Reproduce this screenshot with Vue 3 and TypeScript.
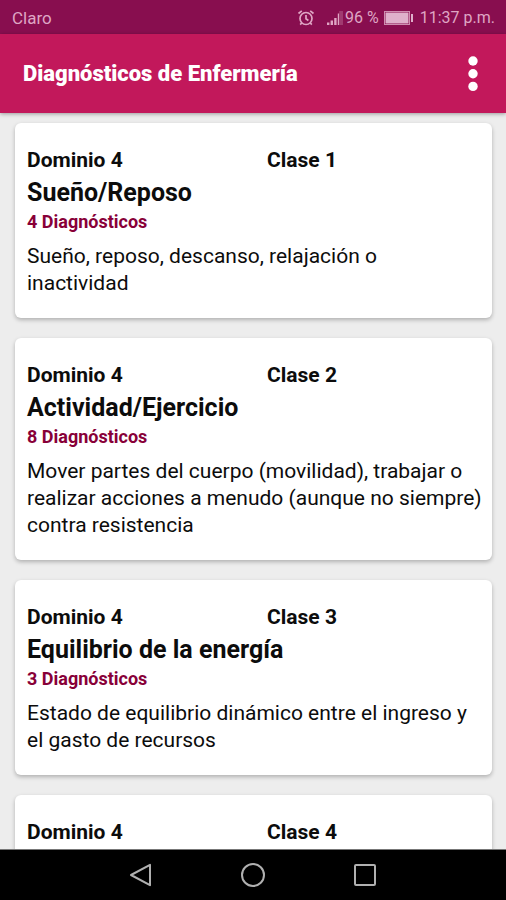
<script setup lang="ts">
interface ClassEntry {
  domain: number
  classNumber: number
  title: string
  diagnoses: number
  description: string
}

const entries: ClassEntry[] = [
  {
    domain: 4,
    classNumber: 1,
    title: 'Sueño/Reposo',
    diagnoses: 4,
    description: 'Sueño, reposo, descanso, relajación o inactividad',
  },
  {
    domain: 4,
    classNumber: 2,
    title: 'Actividad/Ejercicio',
    diagnoses: 8,
    description:
      'Mover partes del cuerpo (movilidad), trabajar o realizar acciones a menudo (aunque no siempre) contra resistencia',
  },
  {
    domain: 4,
    classNumber: 3,
    title: 'Equilibrio de la energía',
    diagnoses: 3,
    description: 'Estado de equilibrio dinámico entre el ingreso y el gasto de recursos',
  },
  {
    domain: 4,
    classNumber: 4,
    title: '',
    diagnoses: 0,
    description: '',
  },
]
</script>

<template>
  <div class="screen">
    <div class="status">
      <span class="carrier">Claro</span>
      <svg class="alarm" viewBox="0 0 18 18" width="18" height="18" aria-hidden="true">
        <circle cx="9" cy="9.5" r="6" />
        <path d="M9 6v3.8l2.4 1.7M1.5 4.5 4.8 1.8M16.5 4.5 13.2 1.8M4.8 13.8 3.2 15.6M13.2 13.8l1.6 1.8" />
      </svg>
      <svg class="signal" viewBox="0 0 18 16" width="18" height="16" aria-hidden="true">
        <path d="M0 12.5h2.4V15H0zM3.6 10.5H6V15H3.6zM7.2 8h2.4v7H7.2zM10.8 3.5h1.4V15h-1.4z" />
        <path class="dim" d="M12.2 1H16v14h-3.8z" />
      </svg>
      <span>96 %</span>
      <svg class="battery" viewBox="0 0 30 14" width="30" height="14" aria-hidden="true">
        <rect class="shell" x="0.5" y="0.5" width="25" height="13" />
        <rect x="1.5" y="1.5" width="23" height="11" />
        <rect x="27" y="3" width="2" height="8" />
      </svg>
      <span>11:37 p.m.</span>
    </div>

    <header class="app-bar">
      <h1>Diagnósticos de Enfermería</h1>
      <button class="menu" type="button" aria-label="Más opciones">
        <svg viewBox="0 0 10 36" width="10" height="36" aria-hidden="true">
          <circle cx="5" cy="5" r="4.7" />
          <circle cx="5" cy="17.7" r="4.7" />
          <circle cx="5" cy="30.4" r="4.7" />
        </svg>
      </button>
    </header>

    <main class="list">
      <article v-for="entry in entries" :key="entry.classNumber" class="card">
        <div class="labels">
          <span>Dominio {{ entry.domain }}</span>
          <span>Clase {{ entry.classNumber }}</span>
        </div>
        <template v-if="entry.title">
          <h2>{{ entry.title }}</h2>
          <p class="count">{{ entry.diagnoses }} Diagnósticos</p>
          <p class="description">{{ entry.description }}</p>
        </template>
      </article>
    </main>

    <nav class="nav-bar">
      <button type="button" aria-label="Atrás">
        <svg viewBox="0 0 24 24" width="24" height="24" aria-hidden="true">
          <path d="M21 1.8v20.4L2 12z" />
        </svg>
      </button>
      <button type="button" aria-label="Inicio">
        <svg viewBox="0 0 24 24" width="24" height="24" aria-hidden="true">
          <circle cx="12" cy="12" r="11" />
        </svg>
      </button>
      <button type="button" aria-label="Recientes">
        <svg viewBox="0 0 24 24" width="24" height="24" aria-hidden="true">
          <rect x="2" y="2" width="20" height="20" rx="1" />
        </svg>
      </button>
    </nav>
  </div>
</template>

<style>
body {
  margin: 0;
}
</style>

<style scoped>
.screen {
  display: flex;
  flex-direction: column;
  height: 100vh;
  overflow: hidden;
  background: #ededed;
  color: #0c0c0c;
  font-family: Roboto, "Liberation Sans", sans-serif;
}

button {
  display: flex;
  align-items: center;
  justify-content: center;
  padding: 0;
  border: 0;
  background: none;
}

.status {
  display: flex;
  flex: none;
  align-items: center;
  box-sizing: border-box;
  height: 34px;
  padding: 2px 11px 0 12px;
  background: #880e4f;
  color: #dfa6c4;
  font-size: 16px;
  line-height: 20px;
  white-space: nowrap;
}

.carrier {
  flex: 1;
  font-size: 17px;
}

.alarm {
  margin-right: 12px;
  fill: none;
  stroke: #dfa6c4;
  stroke-width: 1.7;
}

.signal {
  fill: #dfa6c4;
}

.dim {
  fill: #a03a70;
}

.battery {
  margin: 0 6px 0 5px;
  fill: #dfb0cb;
}

.shell {
  fill: none;
  stroke: #cf8db0;
}

.app-bar {
  display: flex;
  flex: none;
  align-items: center;
  justify-content: space-between;
  z-index: 1;
  box-sizing: border-box;
  height: 79px;
  padding: 1px 20px 0 23px;
  background: #c2185b;
  color: #fff;
  box-shadow: 0 1px 4px rgba(0, 0, 0, 0.35);
}

h1 {
  margin: 0;
  font-size: 22px;
  font-weight: 900;
  line-height: 28px;
}

.menu {
  width: 26px;
  height: 40px;
  fill: #fff;
}

.list {
  display: flex;
  flex: 1;
  flex-direction: column;
  gap: 20px;
  min-height: 0;
  padding: 10px 14px 0 15px;
  overflow: hidden;
}

.card {
  flex: none;
  padding: 24px 10px 21px 12px;
  border-radius: 6px;
  background: #fff;
  box-shadow: 0 2px 4px rgba(0, 0, 0, 0.26);
}

.labels {
  display: grid;
  grid-template-columns: 240px 1fr;
  font-size: 21px;
  font-weight: 700;
  line-height: 26px;
}

h2 {
  margin: 0;
  font-size: 25px;
  font-weight: 700;
  line-height: 39px;
}

.count {
  margin: 0 0 11px;
  color: #880038;
  font-size: 18px;
  font-weight: 700;
  line-height: 20px;
}

.description {
  margin: 0;
  font-size: 21px;
  line-height: 27px;
}

.nav-bar {
  display: flex;
  flex: none;
  align-items: center;
  justify-content: center;
  gap: 64px;
  z-index: 1;
  height: 50px;
  background: #000;
  box-shadow: 0 -1px 0 #777;
}

.nav-bar button {
  width: 48px;
  height: 48px;
}

.nav-bar svg {
  fill: none;
  stroke: #b0b0b0;
  stroke-width: 2;
  stroke-linejoin: round;
}
</style>
